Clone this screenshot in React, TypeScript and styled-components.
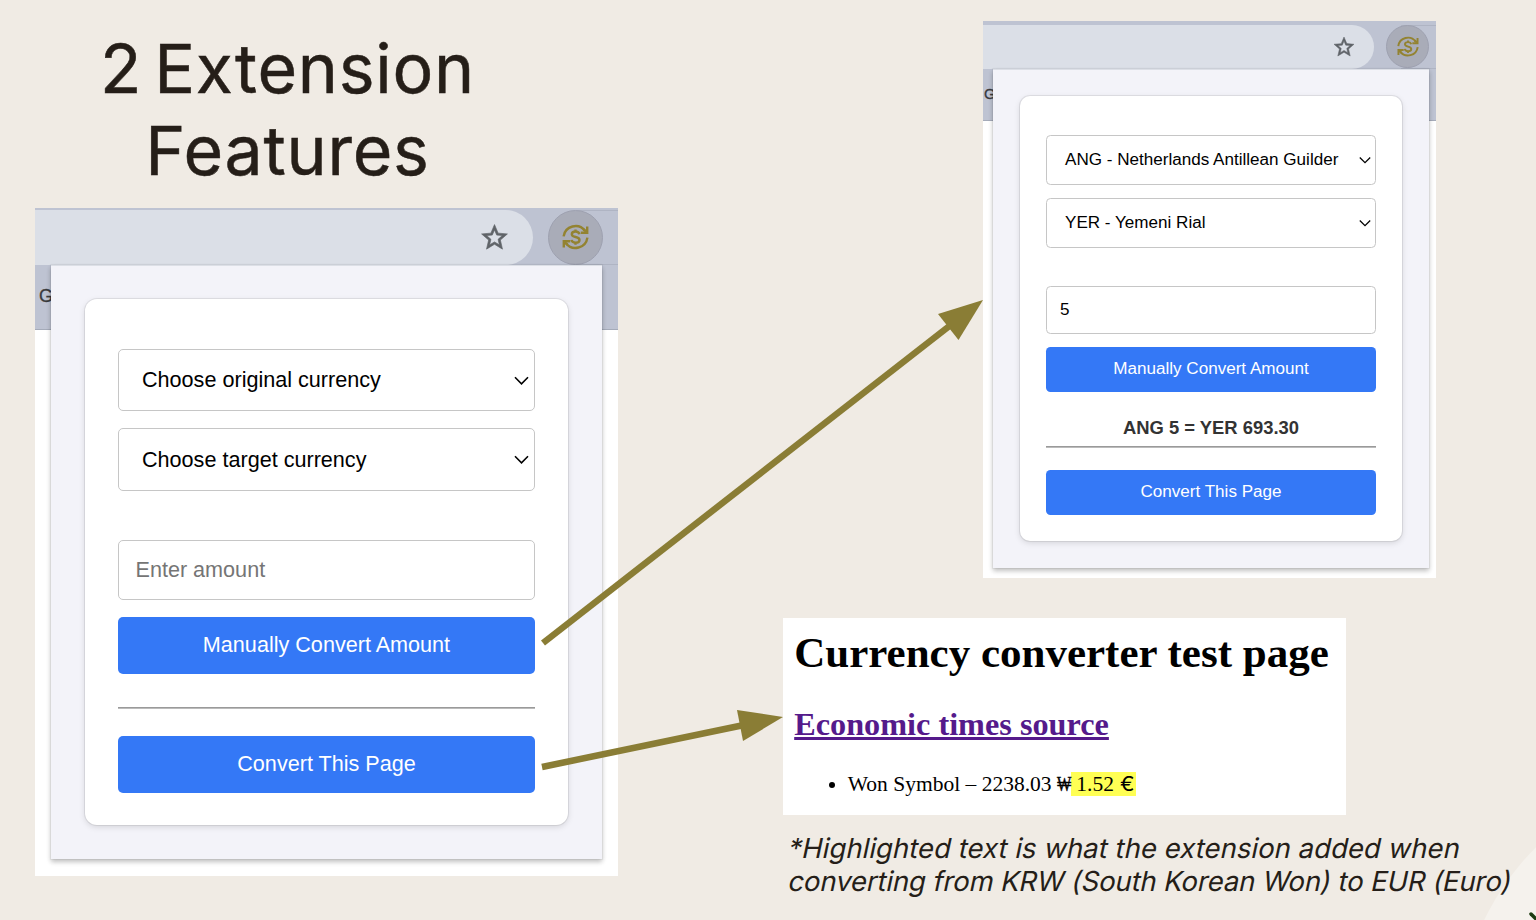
import React from 'react';
import styled, { createGlobalStyle } from 'styled-components';

const Global = createGlobalStyle`
  * { box-sizing: border-box; }
  html, body { margin: 0; padding: 0; overflow: hidden; }
`;

const Slide = styled.main`
  position: relative;
  width: 1536px;
  height: 920px;
  overflow: hidden;
  background: #f0ebe4;
  display: grid;
  grid-template-columns: 783px 1fr;
  font-family: Inter, sans-serif;
  color: #251e18;
`;

const Column = styled.section`
  display: flex;
  flex-direction: column;
  align-items: flex-start;
  min-width: 0;
`;

const Title = styled.h1`
  margin: 0;
  padding: 27px 0 0;
  width: 575px;
  height: 208px;
  font-size: 68px;
  line-height: 82px;
  font-weight: 400;
  letter-spacing: 0.75px;
  word-spacing: -7.8px;
  text-align: center;
  white-space: nowrap;
  -webkit-text-stroke: 0.5px #251e18;
`;

const Caption = styled.p`
  position: relative;
  margin: 17px 0 0 4px;
  font-size: 27.5px;
  line-height: 33px;
  white-space: nowrap;
`;

const CaptionLine = styled.span<{ $spacing: number }>`
  display: block;
  width: max-content;
  letter-spacing: ${(p) => p.$spacing}px;
  transform: skewX(-12deg);
  transform-origin: 0 26px;
`;

type Size = 'large' | 'small';

const metrics = {
  large: {
    width: 583, height: 668, margin: '0 0 0 35px', topLine: 2, bar: 55, barWidth: 498,
    circle: 55, circleGap: 15, star: 31, starRight: 23, strip: 65, side: 16, popW: 551, popH: 594,
    padY: 34, padX: 34, cardH: 526, inX: 33, inY: 50, radius: 12, select: 62.2, gap: 17.3, inputGap: 49.5,
    input: 60, button: 57.3, font: 21.6, textPad: 23, inputPad: 16.5, buttonGap: 16.4, hr: 33, afterHr: 27,
    corner: 5, logo: 27, tab: 18, tabX: 4, tabY: 21, chevron: 15, chevX: 5,
  },
  small: {
    width: 453, height: 557, margin: '21px 0 0 200px', topLine: 4, bar: 44, barWidth: 391,
    circle: 43, circleGap: 12, star: 24, starRight: 18.5, strip: 52, side: 10, popW: 436, popH: 499,
    padY: 27, padX: 27, cardH: 445, inX: 26, inY: 39, radius: 10, select: 50, gap: 13, inputGap: 38.4,
    input: 47.6, button: 45, font: 17.08, textPad: 18, inputPad: 13, buttonGap: 13, hr: 54, afterHr: 21.6,
    corner: 4.5, logo: 22, tab: 15, tabX: 1, tabY: 16, chevron: 12, chevX: 4,
  },
} as const;

type Sized = { $size: Size };
const m = (p: Sized) => metrics[p.$size];

const Shot = styled.div<Sized>`
  width: ${(p) => m(p).width}px;
  height: ${(p) => m(p).height}px;
  margin: ${(p) => m(p).margin};
  background: #fff;
  overflow: hidden;
  font-family: "Liberation Sans", Arial, sans-serif;
  font-size: ${(p) => m(p).font}px;
  color: #000;
`;

const Toolbar = styled.div<Sized>`
  display: flex;
  padding-top: ${(p) => m(p).topLine}px;
  height: ${(p) => m(p).topLine + m(p).bar}px;
  background: #bec3d2;
`;

const AddressBar = styled.div<Sized>`
  display: flex;
  align-items: center;
  justify-content: flex-end;
  width: ${(p) => m(p).barWidth}px;
  height: ${(p) => m(p).bar}px;
  padding: 0 ${(p) => m(p).starRight}px 1px 0;
  background: #dbdfe7;
  border-radius: 0 ${(p) => m(p).bar / 2}px ${(p) => m(p).bar / 2}px 0;
`;

const ExtensionArea = styled.div<Sized>`
  flex: 1;
  padding-left: ${(p) => m(p).circleGap}px;
  background: linear-gradient(#afb4c3, #afb4c3) right top / ${(p) => m(p).circle / 2 + 14}px 1px no-repeat,
    linear-gradient(#afb4c3, #afb4c3) right bottom / ${(p) => m(p).circle / 2 + 14}px 1px no-repeat;
`;

const ExtensionButton = styled.div<Sized>`
  display: flex;
  align-items: center;
  justify-content: center;
  width: ${(p) => m(p).circle}px;
  height: ${(p) => m(p).circle}px;
  border: 1px solid #9ea1b0;
  border-radius: 50%;
  background: #a9acb8;
`;

const BookmarkStrip = styled.div<Sized>`
  height: ${(p) => m(p).strip}px;
  background: #bec3d2;
  border-bottom: 1.5px solid #a5abb9;
  padding: ${(p) => m(p).tabY}px 0 0 ${(p) => m(p).tabX}px;
  font-size: ${(p) => m(p).tab}px;
  line-height: 1.2;
  color: #3a3b3d;
  -webkit-text-stroke: 0.3px #3a3b3d;
`;

const Popup = styled.div<Sized>`
  position: relative;
  margin: ${(p) => -m(p).strip}px 0 0 ${(p) => m(p).side}px;
  width: ${(p) => m(p).popW}px;
  height: ${(p) => m(p).popH}px;
  padding: ${(p) => m(p).padY}px ${(p) => m(p).padX}px;
  background: #f3f3f9;
  box-shadow: inset 0 1px 0 #dcdfe6, 0 0 0 1px rgba(0, 0, 0, 0.04), 0 3px 5px rgba(0, 0, 0, 0.2), 0 2px 5px rgba(0, 0, 0, 0.08);
`;

const Card = styled.div<Sized>`
  height: ${(p) => m(p).cardH}px;
  padding: ${(p) => m(p).inY}px ${(p) => m(p).inX}px 0;
  background: #fff;
  border-radius: ${(p) => m(p).radius}px;
  box-shadow: 0 0 0 1px rgba(0, 0, 0, 0.07), 0 2px 6px rgba(0, 0, 0, 0.13);
`;

const Select = styled.div<Sized>`
  display: flex;
  align-items: center;
  justify-content: space-between;
  height: ${(p) => m(p).select}px;
  margin-bottom: ${(p) => m(p).gap}px;
  padding: 0 ${(p) => m(p).chevX}px 0 ${(p) => m(p).textPad}px;
  border: 1.5px solid #c6c6c6;
  border-radius: ${(p) => m(p).corner}px;
  white-space: nowrap;
`;

const Amount = styled.div<Sized & { $placeholder: boolean }>`
  display: flex;
  align-items: center;
  height: ${(p) => m(p).input}px;
  margin-top: ${(p) => m(p).inputGap}px;
  padding: 0 0 1px ${(p) => m(p).inputPad}px;
  border: 1.5px solid #c6c6c6;
  border-radius: ${(p) => m(p).corner}px;
  color: ${(p) => (p.$placeholder ? '#757575' : '#000')};
`;

const Button = styled.div<Sized & { $top: number }>`
  display: flex;
  align-items: center;
  justify-content: center;
  height: ${(p) => m(p).button}px;
  margin-top: ${(p) => p.$top}px;
  padding-bottom: 1px;
  border-radius: ${(p) => m(p).corner}px;
  background: #3478f6;
  color: #fff;
`;

const Result = styled.div<Sized>`
  height: ${(p) => m(p).hr}px;
  padding-top: 25px;
  font-size: 18.4px;
  line-height: 21px;
  font-weight: 700;
  text-align: center;
  color: #333;
`;

const Rule = styled.div`
  height: 2px;
  background: #9a9a9a;
  border-bottom: 1px solid #bbb;
`;

const TestPage = styled.article`
  width: 563px;
  height: 197px;
  margin-top: 40px;
  padding: 10px 11.2px;
  background: #fff;
  color: #000;
  font-family: "Liberation Serif", "Times New Roman", serif;
  white-space: nowrap;
`;

const PageHeading = styled.h1`
  margin: 0;
  font-size: 43px;
  line-height: 50px;
`;

const SourceLink = styled.h2`
  margin: 28px 0 0;
  font-size: 32.25px;
  line-height: 37px;
  color: #551a8b;
  text-decoration: underline;
`;

const Prices = styled.ul`
  margin: 29px 0 0;
  padding-left: 53.6px;
  font-size: 21.5px;
  line-height: 25px;
`;

const WonSign = styled.span`
  display: inline-block;
  width: 14px;
  line-height: 20px;
  transform: scaleX(0.7);
  transform-origin: 0 50%;
  -webkit-text-stroke: 0.5px #000;
`;

const Highlight = styled.span`
  background: #ffff54;
`;

const EuroSign = styled.span`
  display: inline-block;
  width: 16.4px;
  font-family: Inter, sans-serif;
  font-size: 19.5px;
  line-height: 20px;
  text-align: center;
  transform: scaleX(1.12);
`;

const Backdrop = styled.svg`
  position: absolute;
  right: 0;
  bottom: 0;
`;

const Arrows = styled.svg`
  position: absolute;
  inset: 0;
  pointer-events: none;
`;

const Star = ({ size }: { size: number }) => (
  <svg width={size} height={size} viewBox="0 0 24 24" fill="#5f6368" stroke="#5f6368" strokeWidth="0.5">
    <path d="M22 9.24l-7.19-.62L12 2 9.19 8.63 2 9.24l5.46 4.73L5.82 21 12 17.27 18.18 21l-1.63-7.03L22 9.24zM12 15.4l-3.76 2.27 1-4.28-3.32-2.88 4.38-.38L12 6.1l1.71 4.04 4.38.38-3.32 2.88 1 4.28L12 15.4z" />
  </svg>
);

const CurrencyLogo = ({ size }: { size: number }) => (
  <svg width={size} height={size} viewBox="0 0 27 27" fill="none" stroke="#938331" strokeWidth="2.4">
    <path d="M1.6 12.4A12 12 0 0 1 23 6.8M25.4 13.6A12 12 0 0 1 4 19.2" />
    <path d="M25.2 2.6V8.8H18.8M1.8 23.4V17.2H8.2" />
    <path d="M21.4 5.2L25 8.6M5.600 20.800L2 17.400" />
    <path d="M17.4 10.2C17 8.4 15.6 7.5 13.5 7.5C11.3 7.5 9.8 8.5 9.8 10.2C9.800 14 17.500 12 17.500 15.900C17.500 17.800 15.800 18.700 13.500 18.700C11.200 18.700 9.800 17.700 9.500 15.900M13.500 5.400V7.600M13.500 18.600V20.800" />
  </svg>
);

const Chevron = ({ size }: { size: number }) => (
  <svg width={size} height={size} viewBox="0 0 15 15" fill="none" stroke="#000" strokeWidth="1.6">
    <path d="M1 4.3L7.5 10.8L14 4.3" />
  </svg>
);

type ExtensionProps = { size: Size; from: string; to: string; amount?: string; result?: string };

const ExtensionShot = ({ size, from, to, amount, result }: ExtensionProps) => {
  const d = metrics[size];
  return (
    <Shot $size={size}>
      <Toolbar $size={size}>
        <AddressBar $size={size}><Star size={d.star} /></AddressBar>
        <ExtensionArea $size={size}>
          <ExtensionButton $size={size}><CurrencyLogo size={d.logo} /></ExtensionButton>
        </ExtensionArea>
      </Toolbar>
      <BookmarkStrip $size={size}>G</BookmarkStrip>
      <Popup $size={size}>
        <Card $size={size}>
          <Select $size={size}>{from}<Chevron size={d.chevron} /></Select>
          <Select $size={size}>{to}<Chevron size={d.chevron} /></Select>
          <Amount $size={size} $placeholder={!amount}>{amount ?? 'Enter amount'}</Amount>
          <Button $size={size} $top={d.buttonGap}>Manually Convert Amount</Button>
          <Result $size={size}>{result}</Result>
          <Rule />
          <Button $size={size} $top={d.afterHr}>Convert This Page</Button>
        </Card>
      </Popup>
    </Shot>
  );
};

export default function App() {
  return (
    <>
      <Global />
      <Slide>
        <Backdrop width="60" height="80" viewBox="1476 840 60 80">
          <circle cx="1722" cy="1034.7" r="264" fill="#f5f2ed" />
          <path d="M1531 914L1540 923" stroke="#1d3b12" strokeWidth="3.5" strokeLinecap="round" />
        </Backdrop>
        <Column>
          <Title>2 Extension<br />Features</Title>
          <ExtensionShot size="large" from="Choose original currency" to="Choose target currency" />
        </Column>
        <Column>
          <ExtensionShot
            size="small"
            from="ANG - Netherlands Antillean Guilder"
            to="YER - Yemeni Rial"
            amount="5"
            result="ANG 5 = YER 693.30"
          />
          <TestPage>
            <PageHeading>Currency converter test page</PageHeading>
            <SourceLink>Economic times source</SourceLink>
            <Prices>
              <li>Won Symbol – 2238.03 <WonSign>₩</WonSign><Highlight> 1.52 <EuroSign>€</EuroSign></Highlight></li>
            </Prices>
          </TestPage>
          <Caption>
            <CaptionLine $spacing={0.04}>*Highlighted text is what the extension added when</CaptionLine>
            <CaptionLine $spacing={-0.12}>converting from KRW (South Korean Won) to EUR (Euro)</CaptionLine>
          </Caption>
        </Column>
        <Arrows width="1536" height="920" viewBox="0 0 1536 920">
          <g stroke="#8a7d35" strokeWidth="6.5">
            <path d="M543 643L952 324" />
            <path d="M542 767L744 725" />
          </g>
          <g fill="#8a7d35">
            <path d="M983 300L938 314L958.500 340Z" />
            <path d="M783 717L737 710L743 741Z" />
          </g>
        </Arrows>
      </Slide>
    </>
  );
}
